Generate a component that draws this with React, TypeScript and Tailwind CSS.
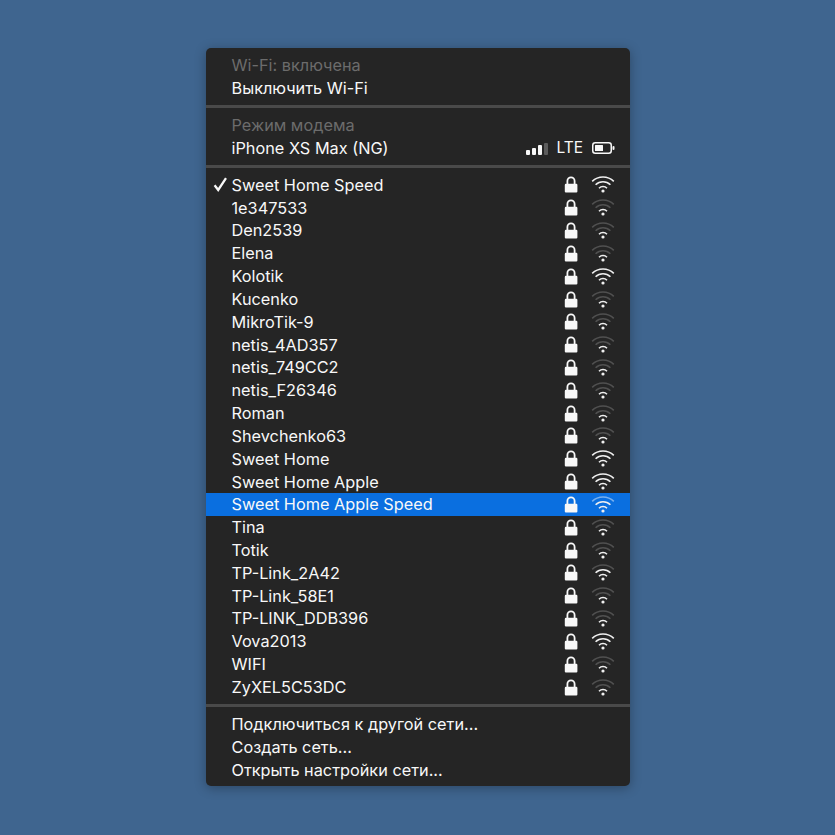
const font = "font-['Inter','Liberation_Sans',sans-serif]";

type Net = { name: string; level: number };

const networks: Net[] = [
  { name: "Sweet Home Speed", level: 3 },
  { name: "1e347533", level: 1 },
  { name: "Den2539", level: 1 },
  { name: "Elena", level: 1 },
  { name: "Kolotik", level: 3 },
  { name: "Kucenko", level: 1 },
  { name: "MikroTik-9", level: 1 },
  { name: "netis_4AD357", level: 1 },
  { name: "netis_749CC2", level: 1 },
  { name: "netis_F26346", level: 1 },
  { name: "Roman", level: 1 },
  { name: "Shevchenko63", level: 1 },
  { name: "Sweet Home", level: 3 },
  { name: "Sweet Home Apple", level: 3 },
  { name: "Sweet Home Apple Speed", level: 2 },
  { name: "Tina", level: 1 },
  { name: "Totik", level: 1 },
  { name: "TP-Link_2A42", level: 2 },
  { name: "TP-Link_58E1", level: 1 },
  { name: "TP-LINK_DDB396", level: 1 },
  { name: "Vova2013", level: 3 },
  { name: "WIFI", level: 1 },
  { name: "ZyXEL5C53DC", level: 1 },
];

function Lock() {
  return (
    <svg width="14" height="17" viewBox="0 0 14 17" className="shrink-0">
      <path d="M3.4 9V5a3.6 3.6 0 0 1 7.2 0V9" fill="none" stroke="#f8f8f8" strokeWidth="1.8" />
      <rect x="0.8" y="7.8" width="12.6" height="8.8" rx="1.1" fill="#f8f8f8" />
    </svg>
  );
}

function Wifi({ level, active }: { level: number; active?: boolean }) {
  const on = "#f0f0f0";
  const off = active ? "rgba(255,255,255,0.45)" : "rgba(255,255,255,0.2)";
  return (
    <svg width="24" height="17" viewBox="0 0 24 17" className="shrink-0">
      <path d="M1.2 5.4a15.6 15.6 0 0 1 21.6 0" fill="none" strokeWidth="1.6" stroke={level >= 3 ? on : off} />
      <path d="M4.6 8.8a10.6 10.6 0 0 1 14.8 0" fill="none" strokeWidth="1.6" stroke={level >= 2 ? on : off} />
      <path d="M8 12.2a5.7 5.7 0 0 1 8 0" fill="none" strokeWidth="1.6" stroke={on} />
      <circle cx="12" cy="15" r="1.6" fill={on} />
    </svg>
  );
}

function Row({ children, active }: { children: React.ReactNode; active?: boolean }) {
  return (
    <div className={`flex h-[22.84px] items-center pl-[26px] pr-[14.5px] text-[16.3px] leading-none text-[#f8f8f8] ${active ? "bg-[#0a6fe0]" : ""}`}>
      {children}
    </div>
  );
}

function Sep() {
  return <div className="my-[5.65px] h-[3px] bg-[#4a4a4a]" />;
}

export default function App() {
  return (
    <div className={`flex h-[835px] w-[835px] justify-center bg-[#3f658f] pt-[48px] ${font}`}>
      <div className="h-[738px] w-[424px] overflow-hidden rounded-[5px] bg-[#252525] pt-[5.6px] shadow-[0_2px_12px_rgba(0,0,0,0.3)]">
        <Row><span className="text-[#6c6c6c]">Wi-Fi: включена</span></Row>
        <Row>Выключить Wi-Fi</Row>
        <Sep />
        <Row><span className="text-[#6c6c6c]">Режим модема</span></Row>
        <Row>
          <span className="flex-1">iPhone XS Max (NG)</span>
          <span className="mr-[8px] flex items-end gap-[2px] pt-[2px]">
            <span className="h-[5px] w-[4px] rounded-[1px] bg-[#f8f8f8]" />
            <span className="h-[7px] w-[4px] rounded-[1px] bg-[#f8f8f8]" />
            <span className="h-[10px] w-[4px] rounded-[1px] bg-[#f8f8f8]" />
            <span className="h-[12px] w-[4px] rounded-[1px] bg-[#5c5c5c]" />
          </span>
          <span className="mr-[9px] text-[15.5px]">LTE</span>
          <svg width="23" height="12" viewBox="0 0 23 12" className="shrink-0">
            <rect x="0.75" y="0.75" width="18.5" height="10.5" rx="2.5" fill="none" stroke="#f8f8f8" strokeWidth="1.5" />
            <rect x="3" y="3" width="8" height="6" rx="0.5" fill="#f8f8f8" />
            <rect x="20.5" y="4" width="2" height="4" rx="1" fill="#f8f8f8" />
          </svg>
        </Row>
        <Sep />
        {networks.map((n, i) => {
          const active = n.name === "Sweet Home Apple Speed";
          return (
            <Row key={n.name} active={active}>
              {i === 0 && (
                <svg width="15" height="15" viewBox="0 0 15 15" className="ml-[-19px] mr-[4px] shrink-0">
                  <path d="M1.6 8.2 5.2 13 13 1.2" fill="none" stroke="#f8f8f8" strokeWidth="2.3" />
                </svg>
              )}
              <span className="flex-1">{n.name}</span>
              <span className="mr-[13px] flex items-center"><Lock /></span>
              <Wifi level={n.level} active={active} />
            </Row>
          );
        })}
        <Sep />
        <Row>Подключиться к другой сети...</Row>
        <Row>Создать сеть...</Row>
        <Row>Открыть настройки сети...</Row>
      </div>
    </div>
  );
}
